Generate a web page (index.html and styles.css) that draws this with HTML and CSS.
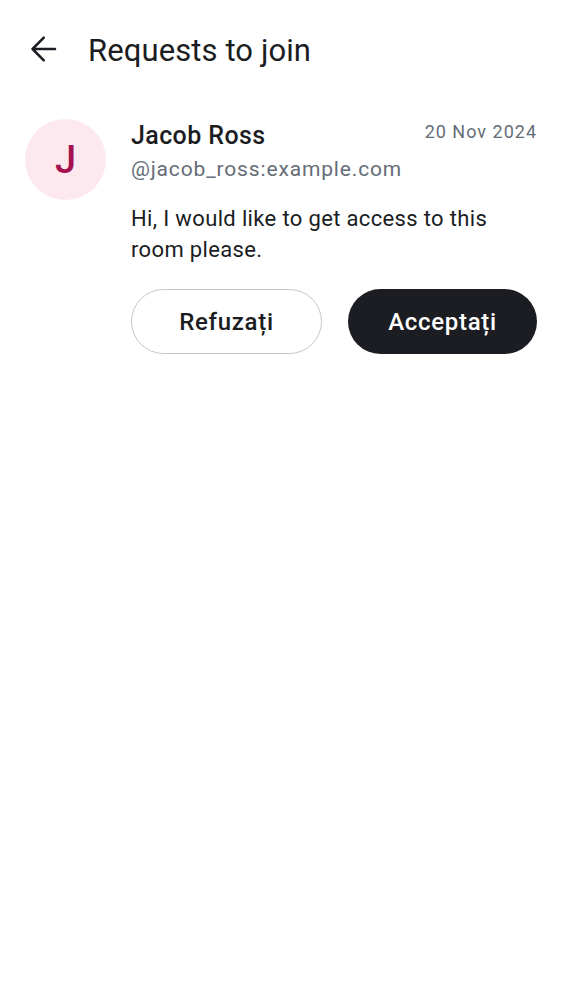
FILE: index.html
```html
<!DOCTYPE html>
<html>
<head>
<meta charset="utf-8">
<link rel="stylesheet" href="styles.css">
</head>
<body>
<header class="topbar">
  <svg class="back" width="28" height="28" viewBox="0 0 28 28"><path d="M26 14H3.5M14.8 2.7L3.5 14l11.3 11.3" fill="none" stroke="#1b1d22" stroke-width="2.5" stroke-linecap="round" stroke-linejoin="round"/></svg>
  <h1 class="title">Requests to join</h1>
</header>
<main class="list">
  <div class="request">
    <div class="avatar">J</div>
    <div class="content">
      <div class="row-top">
        <div class="name">Jacob Ross</div>
        <div class="date">20 Nov 2024</div>
      </div>
      <div class="handle">@jacob_ross:example.com</div>
      <p class="message">Hi, I would like to get access to this room please.</p>
      <div class="actions">
        <button class="btn btn-outline">Refuzați</button>
        <button class="btn btn-solid">Acceptați</button>
      </div>
    </div>
  </div>
</main>
</body>
</html>
```
FILE: styles.css
```css
* { box-sizing: border-box; }
body {
  margin: 0;
  background: #ffffff;
  font-family: Roboto, "Noto Sans", sans-serif;
  color: #1b1d22;
}
.topbar {
  display: flex;
  align-items: center;
  height: 100px;
  padding-left: 29px;
}
.back { display: block; margin-top: -2px; }
.title {
  margin: 0 0 0 31px;
  font-size: 31px;
  font-weight: 400;
  letter-spacing: 0.1px;
}
.list { padding: 0 25px 0 25px; }
.request {
  display: flex;
  gap: 25px;
  padding-top: 19px;
}
.avatar {
  flex: none;
  width: 81px;
  height: 81px;
  border-radius: 50%;
  background: #fde8ef;
  color: #a3124f;
  font-size: 38px;
  font-weight: 500;
  display: flex;
  align-items: center;
  justify-content: center;
}
.content { flex: 1; }
.row-top {
  display: flex;
  justify-content: space-between;
  align-items: flex-start;
}
.name {
  font-size: 25px;
  font-weight: 500;
  line-height: 34px;
  letter-spacing: 0.4px;
}
.date {
  font-size: 18px;
  color: #656d77;
  line-height: 26px;
  letter-spacing: 1px;
}
.handle {
  font-size: 21px;
  color: #656d77;
  line-height: 32px;
  letter-spacing: 0.85px;
}
.message {
  margin: 18px 0 0 0;
  font-size: 22px;
  line-height: 31px;
  letter-spacing: 0.35px;
}
.actions {
  display: flex;
  gap: 26px;
  margin-top: 24px;
}
.btn {
  flex: 1;
  height: 65px;
  border-radius: 33px;
  font-family: Roboto, "Noto Sans", sans-serif;
  font-size: 24px;
  font-weight: 500;
  letter-spacing: 0.7px;
}
.btn-outline {
  background: #fff;
  border: 1.5px solid #c3c7cf;
  color: #1b1d22;
}
.btn-solid {
  background: #1b1d22;
  border: none;
  color: #fff;
}
```
